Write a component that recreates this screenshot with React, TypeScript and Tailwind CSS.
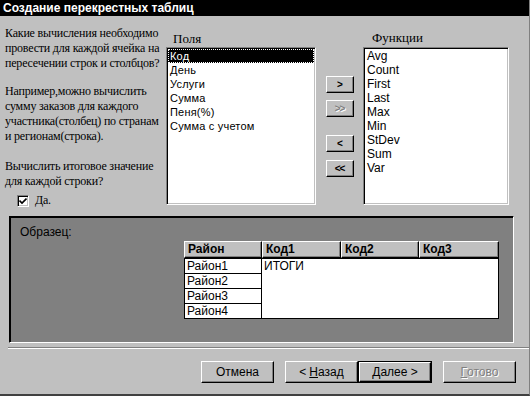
import React from 'react';

const fields = ['Код', 'День', 'Услуги', 'Сумма', 'Пеня(%)', 'Сумма с учетом'];
const functions = ['Avg', 'Count', 'First', 'Last', 'Max', 'Min', 'StDev', 'Sum', 'Var'];
const regions = ['Район1', 'Район2', 'Район3', 'Район4'];

const sunken =
  'border border-t-[#808080] border-l-[#808080] border-r-white border-b-white shadow-[inset_1px_1px_0_#000,inset_-1px_-1px_0_#c0c0c0]';
const raised =
  'border border-t-white border-l-white border-r-black border-b-black shadow-[inset_-1px_-1px_0_#808080]';

function ArrowButton({ label, disabled }: { label: string; disabled?: boolean }) {
  return (
    <button
      type="button"
      className={`${raised} w-[28px] h-[17px] bg-[#c0c0c0] flex items-center justify-center text-[10px] font-bold leading-none tracking-[-1px] ${
        disabled ? 'text-[#808080] [text-shadow:1px_1px_0_#fff]' : 'text-black'
      }`}
    >
      {label}
    </button>
  );
}

function DialogButton({
  children,
  disabled,
  isDefault,
}: {
  children: React.ReactNode;
  disabled?: boolean;
  isDefault?: boolean;
}) {
  return (
    <div className={isDefault ? 'border border-black' : ''}>
      <button
        type="button"
        className={`${raised} bg-[#c0c0c0] flex items-center justify-center text-[12px] ${
          isDefault ? 'w-[72px] h-[20px]' : 'w-[73px] h-[22px]'
        } ${disabled ? 'text-[#808080] [text-shadow:1px_1px_0_#fff]' : 'text-black'}`}
      >
        {children}
      </button>
    </div>
  );
}

export default function App() {
  return (
    <div className="w-[530px] h-[396px] bg-[#c0c0c0] flex flex-col border-r border-b-2 border-r-[#808080] border-b-[#404040] font-['Liberation_Sans',Arial,sans-serif] overflow-hidden">
      <div className="h-[16px] bg-black text-white font-bold text-[12px] leading-[16px] pl-[3px]">
        Создание перекрестных таблиц
      </div>

      <div className="flex h-[194px]">
        {/* пояснение слева */}
        <div className="w-[166px] shrink-0 pl-[5px] pt-[10px] font-['Liberation_Serif','Times_New_Roman',serif] text-[12px] leading-[15px] tracking-[-0.2px] text-black whitespace-nowrap">
          <p>
            Какие вычисления необходимо
            <br />
            провести для каждой ячейка на
            <br />
            пересечении строк и столбцов?
          </p>
          <p className="mt-[13px]">
            Например,можно вычислить
            <br />
            сумму заказов для каждого
            <br />
            участника(столбец) по странам
            <br />
            и регионам(строка).
          </p>
          <p className="mt-[15px]">
            Вычислить итоговое значение
            <br />
            для каждой строки?
          </p>
          <div className="flex items-center mt-[4px] ml-[12px] gap-[6px]">
            <div className={`${sunken} w-[12px] h-[12px] bg-white flex items-center justify-center`}>
              <svg width="8" height="8" viewBox="0 0 8 8">
                <path d="M0.5 3.5 L3 6 L7.5 1.5" stroke="#000" strokeWidth="1.6" fill="none" />
              </svg>
            </div>
            <span>Да.</span>
          </div>
        </div>

        {/* поля */}
        <div className="w-[150px] shrink-0 flex flex-col">
          <div className="h-[31px] pl-[7px] pt-[15px] font-['Liberation_Serif','Times_New_Roman',serif] text-[13px] leading-[15px]">
            Поля
          </div>
          <div className={`${sunken} h-[158px] bg-white p-[1px] text-[11px] tracking-[0.2px] leading-[14px]`}>
            {fields.map((f, i) => (
              <div
                key={f}
                className={`h-[14px] pl-[2px] ${
                  i === 0 ? 'bg-black text-white outline-1 outline-dotted outline-white -outline-offset-1' : 'text-black'
                }`}
              >
                {f}
              </div>
            ))}
          </div>
        </div>

        {/* кнопки */}
        <div className="w-[47px] shrink-0 flex flex-col items-center pt-[60px]">
          <ArrowButton label=">" />
          <div className="mt-[7px]">
            <ArrowButton label=">>" disabled />
          </div>
          <div className="mt-[18px]">
            <ArrowButton label="<" />
          </div>
          <div className="mt-[8px]">
            <ArrowButton label="<<" />
          </div>
        </div>

        {/* функции */}
        <div className="w-[146px] shrink-0 flex flex-col">
          <div className="h-[31px] pl-[9px] pt-[14px] font-['Liberation_Serif','Times_New_Roman',serif] text-[13px] leading-[15px]">
            Функции
          </div>
          <div className={`${sunken} h-[158px] bg-white p-[1px] text-[12px] leading-[14px]`}>
            {functions.map((f) => (
              <div key={f} className="h-[14px] pl-[2px] text-black">
                {f}
              </div>
            ))}
          </div>
        </div>
      </div>

      {/* образец */}
      <div className="ml-[9px] mt-[6px] w-[505px] h-[127px] bg-[#808080] border border-t-black border-l-black border-r-white border-b-white shadow-[inset_1px_1px_0_#000]">
        <div className="pl-[10px] pt-[8px] text-[12px] leading-[14px] text-black">Образец:</div>
        <div className="ml-[174px] mt-[2px] w-[315px] text-[12px] leading-[16px]">
          <div className="grid grid-cols-[78px_79px_78px_80px] h-[17px]">
            {['Район', 'Код1', 'Код2', 'Код3'].map((h) => (
              <div key={h} className={`${raised} bg-[#c0c0c0] font-bold pl-[3px] leading-[15px]`}>
                {h}
              </div>
            ))}
          </div>
          <div className="flex">
            <div className="w-[78px] flex flex-col">
              {regions.map((r) => (
                <div key={r} className="h-[16px] bg-white border border-black -mt-px first:mt-0 pl-[2px] leading-[14px]">
                  {r}
                </div>
              ))}
            </div>
            <div className="flex-1 h-[61px] bg-white border border-black -ml-px pl-[2px] leading-[14px]">
              ИТОГИ
            </div>
          </div>
        </div>
      </div>

      <div className="ml-[8px] mt-[4px] h-[2px] border-t border-t-[#808080] border-b border-b-white" />

      <div className="flex mt-[12px] pl-[201px] items-start">
        <DialogButton>Отмена</DialogButton>
        <div className="ml-[11px]">
          <DialogButton>
            &lt; <span className="underline ml-[3px]">Н</span>азад
          </DialogButton>
        </div>
        <DialogButton isDefault>
          <span className="underline">Д</span>алее &gt;
        </DialogButton>
        <div className="ml-[11px]">
          <DialogButton disabled>
            <span className="underline">Г</span>отово
          </DialogButton>
        </div>
      </div>
    </div>
  );
}
